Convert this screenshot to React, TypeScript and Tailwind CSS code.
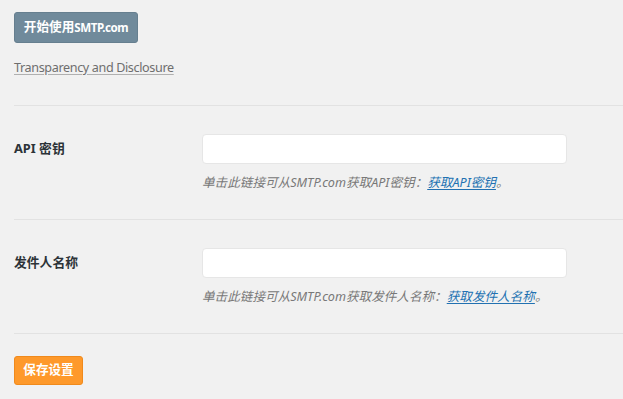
import React from "react";

const font = { fontFamily: '"Noto Sans", "Noto Sans CJK SC", sans-serif' };

function Row({ label, help, link }: { label: string; help: string; link: string }) {
  return (
    <div className="border-t border-[#e2e2e2] pt-[28px] pb-[27px] flex">
      <div className="w-[188px] shrink-0 h-[30px] flex items-center text-[12.8px] font-bold text-[#2c3338]">
        {label}
      </div>
      <div className="flex flex-col">
        <div className="w-[365px] h-[30px] bg-white border border-[#e6e6e6] rounded-[4px]" />
        <div className="mt-[10px] h-[18px] leading-[18px] text-[12.6px] italic text-[#787878] whitespace-nowrap">
          {help}
          <a className="text-[#2271b1] underline underline-offset-2">{link}</a>。
        </div>
      </div>
    </div>
  );
}

export default function App() {
  return (
    <div className="w-[623px] h-[399px] bg-[#f1f1f1] overflow-hidden pl-[13px]" style={font}>
      <div className="pt-[12px] pl-[1px]">
        <div className="w-[124px] h-[31px] rounded-[3px] bg-[#708a9b] border border-[#667f8f] flex items-center justify-center text-white font-bold text-[12.6px]">
          开始使用<span className="text-[11.6px] tracking-[-0.45px]">SMTP.com</span>
        </div>
        <div className="mt-[16px] h-[18px] leading-[18px] text-[12.6px] tracking-[-0.37px] text-[#6e6e6e] underline decoration-[#b0b0b0] underline-offset-2">
          Transparency and Disclosure
        </div>
      </div>
      <div className="mt-[28px]">
        <div className="pl-[1px]">
          <Row label="API 密钥" help="单击此链接可从SMTP.com获取API密钥：" link="获取API密钥" />
          <Row label="发件人名称" help="单击此链接可从SMTP.com获取发件人名称：" link="获取发件人名称" />
          <div className="border-t border-[#e2e2e2] pt-[22px]">
            <div className="w-[69px] h-[29px] rounded-[3px] bg-[#fe992b] border border-[#f08a1c] flex items-center justify-center text-white font-bold text-[12.6px]">
              保存设置
            </div>
          </div>
        </div>
      </div>
    </div>
  );
}
